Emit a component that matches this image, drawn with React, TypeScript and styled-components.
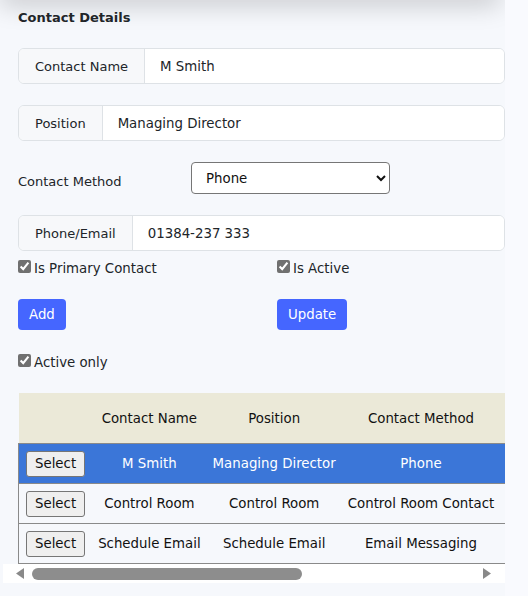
import React from "react";
import styled, { createGlobalStyle } from "styled-components";

const Global = createGlobalStyle`
  html, body {
    margin: 0;
    padding: 0;
    background: #f9fafe;
    font-family: "DejaVu Sans", Verdana, sans-serif;
    font-size: 13.33px;
    color: #212529;
  }
`;

const Page = styled.div`
  width: 505px;
  min-height: 596px;
  box-sizing: border-box;
  padding: 0 0 0 18px;
  background: #f6f8fc;
  overflow: hidden;
`;

const TopShade = styled.div`
  height: 20px;
  margin: -20px 5px 0 -18px;
  box-shadow: 0 4px 26px rgba(0, 0, 0, 0.22);
  background: #e9eaee;
`;

const Title = styled.h5`
  margin: 0;
  padding-top: 10px;
  height: 17px;
  font-size: 13px;
  font-weight: bold;
  color: #212529;
`;

const InputGroup = styled.div<{ $top: number }>`
  display: flex;
  height: 36px;
  margin-top: ${(p) => p.$top}px;
  border: 1px solid #dee2e6;
  border-radius: 6px;
  box-sizing: border-box;
  overflow: hidden;
  background: #fff;
`;

const GroupLabel = styled.span`
  display: flex;
  align-items: center;
  padding: 0 16px;
  font-size: 13px;
  background: #f7f8fa;
  border-right: 1px solid #dee2e6;
  white-space: nowrap;
`;

const GroupInput = styled.input`
  flex: 1;
  border: 0;
  outline: none;
  padding: 0 15px;
  font: inherit;
  color: #212529;
  background: #fff;
`;

const MethodRow = styled.div`
  display: flex;
  align-items: center;
  margin-top: 21px;
  height: 32px;
`;

const MethodLabel = styled.label`
  width: 173px;
  padding-top: 7px;
  font-size: 13px;
`;

const MethodSelect = styled.select`
  width: 199px;
  height: 32px;
  padding: 0 10px;
  font: inherit;
  color: #111;
  background: #fff;
  border: 1px solid #767676;
  border-radius: 4px;
`;

const Pair = styled.div<{ $top: number }>`
  display: grid;
  grid-template-columns: 259px 1fr;
  margin-top: ${(p) => p.$top}px;
`;

const CheckLabel = styled.label`
  display: block;
  line-height: 19px;
  color: #212529;

  input {
    margin: 3px 3px 3px 0;
    accent-color: #707070;
  }
`;

const Button = styled.button`
  height: 31px;
  padding: 0 11px;
  border: 0;
  border-radius: 4px;
  background: #4566ff;
  color: #fff;
  font: inherit;
  justify-self: start;
`;

const ActiveOnly = styled(CheckLabel)`
  margin-top: 21px;
`;

const Scroller = styled.div`
  margin: 21px 0 0 -15px;
  padding-left: 15px;
  overflow: hidden;
`;

const Table = styled.table`
  border-collapse: collapse;
  background: #f6f8fc;
  white-space: nowrap;
  color: #111;

  th {
    height: 50px;
    padding: 0 6px;
    font-weight: normal;
    background: #ebe9d8;
    border-bottom: 1px solid #8a8a8a;
  }

  td {
    height: 39px;
    padding: 0 6px;
    text-align: center;
    border-bottom: 1px solid #8a8a8a;
  }

  td:first-child {
    border-left: 1px solid #8a8a8a;
    padding: 0 7px;
  }
`;

const Row = styled.tr<{ $selected?: boolean }>`
  background: ${(p) => (p.$selected ? "#3b76d8" : "transparent")};
  color: ${(p) => (p.$selected ? "#fff" : "#111")};
`;

const SelectButton = styled.button`
  height: 26px;
  padding: 0 8px;
  font: inherit;
  color: #111;
  background: #efefef;
  border: 1px solid #767676;
  border-radius: 3px;
`;

const Wide = styled.th<{ $w: number }>`
  min-width: ${(p) => p.$w}px;
`;

/* horizontal scrollbar of the table */
const ScrollBar = styled.div`
  display: flex;
  align-items: center;
  height: 19px;
  margin-left: -15px;
  background: #fff;
`;

const ScrollArrow = styled.div<{ $dir: "left" | "right" }>`
  width: 26px;
  height: 19px;
  display: flex;
  align-items: center;
  justify-content: ${(p) => (p.$dir === "left" ? "flex-end" : "flex-start")};
  padding: ${(p) => (p.$dir === "left" ? "0 5px 0 0" : "0 0 0 4px")};
  box-sizing: border-box;
`;

const ScrollTrack = styled.div`
  flex: 1;
  height: 19px;
  display: flex;
  align-items: center;
`;

const ScrollThumb = styled.div`
  height: 12px;
  margin-left: 3px;
  border-radius: 6px;
  background: #8d8d8d;
`;

const Triangle = ({ dir }: { dir: "left" | "right" }) => (
  <svg width="8" height="11" viewBox="0 0 8 11">
    <path d={dir === "left" ? "M8 0 L8 11 L0 5.5 Z" : "M0 0 L0 11 L8 5.5 Z"} fill="#898989" />
  </svg>
);

const contacts = [
  { name: "M Smith", position: "Managing Director", method: "Phone", primary: true, active: true },
  { name: "Control Room", position: "Control Room", method: "Control Room Contact", primary: false, active: true },
  { name: "Schedule Email", position: "Schedule Email", method: "Email Messaging", primary: false, active: true },
];

export default function App() {
  return (
    <>
      <Global />
      <Page>
        <TopShade />
        <Title>Contact Details</Title>

        <InputGroup $top={21}>
          <GroupLabel>Contact Name</GroupLabel>
          <GroupInput defaultValue="M Smith" />
        </InputGroup>

        <InputGroup $top={21}>
          <GroupLabel>Position</GroupLabel>
          <GroupInput defaultValue="Managing Director" />
        </InputGroup>

        <MethodRow>
          <MethodLabel>Contact Method</MethodLabel>
          <MethodSelect defaultValue="Phone">
            <option>Phone</option>
            <option>Email</option>
            <option>Email Messaging</option>
            <option>Control Room Contact</option>
          </MethodSelect>
        </MethodRow>

        <InputGroup $top={21}>
          <GroupLabel>Phone/Email</GroupLabel>
          <GroupInput defaultValue="01384-237 333" />
        </InputGroup>

        <Pair $top={6}>
          <CheckLabel>
            <input type="checkbox" defaultChecked />
            Is Primary Contact
          </CheckLabel>
          <CheckLabel>
            <input type="checkbox" defaultChecked />
            Is Active
          </CheckLabel>
        </Pair>

        <Pair $top={21}>
          <Button>Add</Button>
          <Button>Update</Button>
        </Pair>

        <ActiveOnly>
          <input type="checkbox" defaultChecked />
          Active only
        </ActiveOnly>

        <Scroller>
          <Table>
            <thead>
              <tr>
                <th style={{ minWidth: 60 }}></th>
                <th>Contact Name</th>
                <th>Position</th>
                <th>Contact Method</th>
                <Wide $w={140}>Is Primary Contact</Wide>
                <Wide $w={156}>Is Active</Wide>
              </tr>
            </thead>
            <tbody>
              {contacts.map((c, i) => (
                <Row key={c.name} $selected={i === 0}>
                  <td>
                    <SelectButton>Select</SelectButton>
                  </td>
                  <td>{c.name}</td>
                  <td>{c.position}</td>
                  <td>{c.method}</td>
                  <td>{c.primary ? "Yes" : "No"}</td>
                  <td>{c.active ? "Yes" : "No"}</td>
                </Row>
              ))}
            </tbody>
          </Table>
        </Scroller>
        <ScrollBar>
          <ScrollArrow $dir="left">
            <Triangle dir="left" />
          </ScrollArrow>
          <ScrollTrack>
            <ScrollThumb style={{ width: 270 }} />
          </ScrollTrack>
          <ScrollArrow $dir="right">
            <Triangle dir="right" />
          </ScrollArrow>
        </ScrollBar>
      </Page>
    </>
  );
}
